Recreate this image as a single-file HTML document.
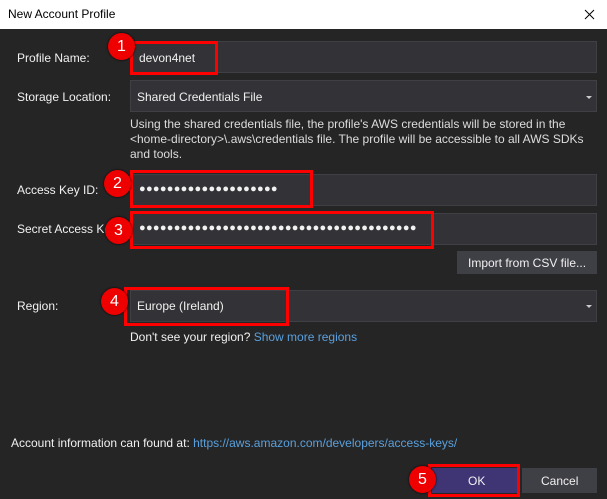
<!DOCTYPE html>
<html><head><style>
*{margin:0;padding:0;box-sizing:border-box}
body{width:607px;height:499px;background:#252526;font-family:"Liberation Sans",sans-serif;font-size:12px;color:#f1f1f1;position:relative;overflow:hidden}
.t{position:absolute;white-space:nowrap}
.title{position:absolute;left:0;top:0;width:607px;height:29px;background:#fff;color:#000}
.in{position:absolute;background:#333337;border:1px solid #3f3f46}
.rb{position:absolute;border:3px solid #f00}
.b{position:absolute;width:27px;height:27px;border-radius:50%;background:#e00;color:#fff;font-size:16px;text-align:center;line-height:27px;box-shadow:0 0 2px #000}
.arr{position:absolute;width:0;height:0;border-left:3px solid transparent;border-right:3px solid transparent;border-top:3px solid #ccc}
.dots{font-size:11px;letter-spacing:0.3px}
a{color:#5aa0dc;text-decoration:none}
</style></head><body>
<div class="title"><span class="t" style="left:8px;top:7px;color:#000">New Account Profile</span>
<svg style="position:absolute;left:584px;top:9px" width="11" height="11"><path d="M1 1L10 10M10 1L1 10" stroke="#000" stroke-width="1"/></svg></div>

<span class="t" style="left:17px;top:51px">Profile Name:</span>
<div class="in" style="left:130px;top:41px;width:467px;height:32px"></div>
<span class="t" style="left:139px;top:51px">devon4net</span>

<span class="t" style="left:17px;top:90px">Storage Location:</span>
<div class="in" style="left:130px;top:80px;width:467px;height:32px"></div>
<span class="t" style="left:137px;top:90px">Shared Credentials File</span>
<div class="arr" style="left:586px;top:96px"></div>

<span class="t" style="left:130px;top:117px;line-height:15px;color:#ddd">Using the shared credentials file, the profile's AWS credentials will be stored in the<br>&lt;home-directory&gt;\.aws\credentials file. The profile will be accessible to all AWS SDKs<br>and tools.</span>

<span class="t" style="left:17px;top:183px">Access Key ID:</span>
<div class="in" style="left:130px;top:174px;width:467px;height:32px"></div>
<span class="t dots" style="left:139px;top:183px">●●●●●●●●●●●●●●●●●●●●</span>

<span class="t" style="left:17px;top:222px">Secret Access Key:</span>
<div class="in" style="left:130px;top:213px;width:467px;height:32px"></div>
<span class="t dots" style="left:139px;top:222px">●●●●●●●●●●●●●●●●●●●●●●●●●●●●●●●●●●●●●●●●</span>

<div class="in" style="left:457px;top:251px;width:140px;height:23px;background:#3f3f46"></div>
<span class="t" style="left:468px;top:256px">Import from CSV file...</span>

<span class="t" style="left:17px;top:299px">Region:</span>
<div class="in" style="left:130px;top:290px;width:467px;height:32px"></div>
<span class="t" style="left:137px;top:299px">Europe (Ireland)</span>
<div class="arr" style="left:586px;top:305px"></div>

<span class="t" style="left:130px;top:330px">Don't see your region? <a>Show more regions</a></span>

<span class="t" style="left:11px;top:436px">Account information can found at: <a>https://aws.amazon.com/developers/access-keys/</a></span>

<div class="in" style="left:432px;top:468px;width:85px;height:25px;background:#3f3574;border-color:#3f3574"></div>
<span class="t" style="left:468px;top:474px">OK</span>
<div class="in" style="left:522px;top:468px;width:75px;height:25px;background:#3f3f46"></div>
<span class="t" style="left:541px;top:474px">Cancel</span>

<div class="rb" style="left:130px;top:41px;width:88px;height:34px"></div>
<div class="rb" style="left:130px;top:170px;width:183px;height:38px"></div>
<div class="rb" style="left:130px;top:211px;width:304px;height:38px"></div>
<div class="rb" style="left:124px;top:287px;width:165px;height:39px"></div>
<div class="rb" style="left:428px;top:464px;width:92px;height:33px"></div>

<div class="b" style="left:108px;top:33px">1</div>
<div class="b" style="left:104px;top:170px">2</div>
<div class="b" style="left:105px;top:217px">3</div>
<div class="b" style="left:101px;top:288px">4</div>
<div class="b" style="left:409px;top:466px">5</div>
</body></html>
